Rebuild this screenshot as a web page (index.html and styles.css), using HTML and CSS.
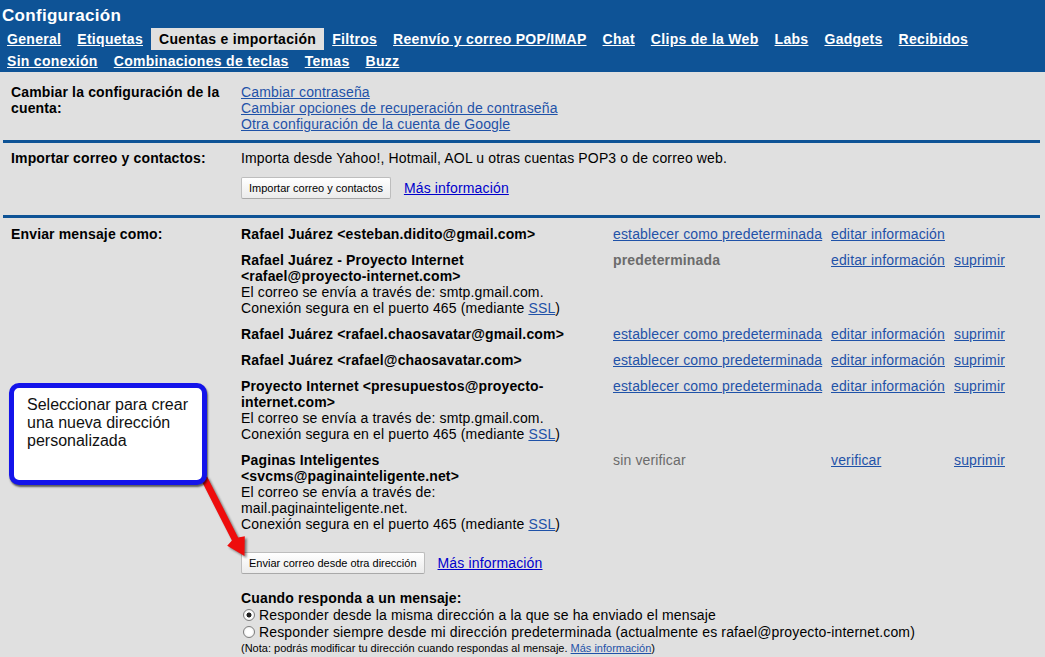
FILE: index.html
```html
<!DOCTYPE html>
<html lang="es">
<head>
<meta charset="utf-8">
<title>Configuración</title>
<link rel="stylesheet" href="styles.css">
</head>
<body>
<div class="page">
  <header class="header">
    <h1 class="title">Configuración</h1>
    <nav class="tabs">
      <a class="tab">General</a>
      <a class="tab">Etiquetas</a>
      <a class="tab active">Cuentas e importación</a>
      <a class="tab">Filtros</a>
      <a class="tab">Reenvío y correo POP/IMAP</a>
      <a class="tab">Chat</a>
      <a class="tab">Clips de la Web</a>
      <a class="tab">Labs</a>
      <a class="tab">Gadgets</a>
      <a class="tab">Recibidos</a>
    </nav>
    <nav class="tabs">
      <a class="tab">Sin conexión</a>
      <a class="tab">Combinaciones de teclas</a>
      <a class="tab">Temas</a>
      <a class="tab">Buzz</a>
    </nav>
  </header>

  <section class="section sec-account">
    <div class="label">Cambiar la configuración de la cuenta:</div>
    <div class="body links-col">
      <a class="link">Cambiar contraseña</a>
      <a class="link">Cambiar opciones de recuperación de contraseña</a>
      <a class="link">Otra configuración de la cuenta de Google</a>
    </div>
  </section>

  <section class="section sec-import">
    <div class="label">Importar correo y contactos:</div>
    <div class="body">
      <div>Importa desde Yahoo!, Hotmail, AOL u otras cuentas POP3 o de correo web.</div>
      <div class="btn-row">
        <button class="btn">Importar correo y contactos</button>
        <a class="link link-strong">Más información</a>
      </div>
    </div>
  </section>

  <section class="section sec-send">
    <div class="label">Enviar mensaje como:</div>
    <div class="body">
      <div class="accounts">
        <div class="acct-name"><b>Rafael Juárez &lt;esteban.didito@gmail.com&gt;</b></div>
        <div><a class="link">establecer como predeterminada</a></div>
        <div><a class="link">editar información</a></div>
        <div></div>

        <div class="acct-name"><b>Rafael Juárez - Proyecto Internet &lt;rafael@proyecto-internet.com&gt;</b><br>El correo se envía a través de: smtp.gmail.com.<br>Conexión segura en el puerto 465 (mediante <a class="link">SSL</a>)</div>
        <div class="muted"><b>predeterminada</b></div>
        <div><a class="link">editar información</a></div>
        <div><a class="link">suprimir</a></div>

        <div class="acct-name"><b>Rafael Juárez &lt;rafael.chaosavatar@gmail.com&gt;</b></div>
        <div><a class="link">establecer como predeterminada</a></div>
        <div><a class="link">editar información</a></div>
        <div><a class="link">suprimir</a></div>

        <div class="acct-name"><b>Rafael Juárez &lt;rafael@chaosavatar.com&gt;</b></div>
        <div><a class="link">establecer como predeterminada</a></div>
        <div><a class="link">editar información</a></div>
        <div><a class="link">suprimir</a></div>

        <div class="acct-name"><b>Proyecto Internet &lt;presupuestos@proyecto-internet.com&gt;</b><br>El correo se envía a través de: smtp.gmail.com.<br>Conexión segura en el puerto 465 (mediante <a class="link">SSL</a>)</div>
        <div><a class="link">establecer como predeterminada</a></div>
        <div><a class="link">editar información</a></div>
        <div><a class="link">suprimir</a></div>

        <div class="acct-name"><b>Paginas Inteligentes &lt;svcms@paginainteligente.net&gt;</b><br>El correo se envía a través de: mail.paginainteligente.net.<br>Conexión segura en el puerto 465 (mediante <a class="link">SSL</a>)</div>
        <div class="muted">sin verificar</div>
        <div><a class="link">verificar</a></div>
        <div><a class="link">suprimir</a></div>
      </div>

      <div class="btn-row send-row">
        <button class="btn">Enviar correo desde otra dirección</button>
        <a class="link link-strong">Más información</a>
      </div>

      <div class="reply">
        <div class="reply-title">Cuando responda a un mensaje:</div>
        <label class="radio-line"><input type="radio" name="reply" checked> Responder desde la misma dirección a la que se ha enviado el mensaje</label>
        <label class="radio-line"><input type="radio" name="reply"> Responder siempre desde mi dirección predeterminada (actualmente es rafael@proyecto-internet.com)</label>
        <div class="note">(Nota: podrás modificar tu dirección cuando respondas al mensaje. <a class="link">Más información</a>)</div>
      </div>
    </div>
  </section>

  <svg class="arrow" width="60" height="95" viewBox="0 0 60 95" aria-hidden="true">
    <polygon points="5.9,9.6 12.1,6.4 43.1,67.4 49.8,66.3 49.5,86 32.2,75.7 36.9,70.6" fill="#ee0d0d"/>
  </svg>
  <div class="callout">Seleccionar para crear una nueva dirección personalizada</div>
</div>
</body>
</html>
```

FILE: styles.css
```css
* { box-sizing: border-box; }

body {
  margin: 0;
  background: #e0e0e0;
  font-family: "Liberation Sans", Arial, sans-serif;
  font-size: 14px;
  line-height: 16px;
  color: #000;
  letter-spacing: 0.15px;
}

.page {
  position: relative;
  width: 1045px;
  height: 657px;
  overflow: hidden;
}

.header {
  background: #0e5396;
  height: 72px;
  color: #fff;
}

.title {
  margin: 0;
  height: 28px;
  padding: 2px 0 0 2px;
  font-size: 17px;
  line-height: 28px;
  font-weight: bold;
  letter-spacing: 0.3px;
}

.tabs {
  display: flex;
  height: 22px;
  margin-left: -1px;
}

.tab {
  padding: 0 8px;
  line-height: 22px;
  font-weight: bold;
  color: #fff;
  text-decoration: underline;
  letter-spacing: 0.3px;
  white-space: nowrap;
}

.tab.active {
  background: #e0e0e0;
  color: #000;
  text-decoration: none;
}

.section {
  display: flex;
  margin: 0 5px 0 3px;
  padding: 8px 0 8px 8px;
  border-bottom: 3px solid #0e5396;
}

.sec-account { padding-top: 12px; padding-bottom: 8px; }
.sec-import { padding-top: 7px; padding-bottom: 16px; }
.sec-send { border-bottom: none; padding-top: 8px; }

.label {
  width: 230px;
  flex: none;
  font-weight: bold;
  padding-right: 8px;
}

.body { flex: 1; }

.links-col { display: flex; flex-direction: column; align-items: flex-start; }

.link {
  color: #1f52a8;
  text-decoration: underline;
  cursor: pointer;
}

.link-strong { color: #0000cc; }

.btn-row {
  display: flex;
  align-items: center;
  gap: 13px;
  margin-top: 11px;
}

.btn {
  font-family: "Liberation Sans", Arial, sans-serif;
  font-size: 11px;
  letter-spacing: 0;
  height: 22px;
  padding: 0 7px;
  border: 1px solid #bdbdbd;
  border-bottom-color: #a9a9a9;
  border-radius: 2px;
  background: linear-gradient(#ffffff, #ebebeb);
  color: #000;
}

.accounts {
  display: grid;
  grid-template-columns: 372px 218px 123px 1fr;
  row-gap: 10px;
}

.acct-name { padding-right: 27px; }

.muted { color: #6b6b6b; }

.send-row { margin-top: 20px; }

.reply { margin-top: 16px; }

.reply-title { font-weight: bold; }

.radio-line {
  display: flex;
  align-items: center;
  height: 17px;
  gap: 4px;
}

.radio-line input {
  appearance: none;
  -webkit-appearance: none;
  width: 12px;
  height: 12px;
  margin: 0 0 0 2px;
  border: 1px solid #7d7d7d;
  border-radius: 50%;
  background: radial-gradient(circle, #fff 40%, #e4e4e4 100%);
}

.radio-line input:checked {
  background: radial-gradient(circle, #222 0 2.2px, #fff 2.8px 45%, #e4e4e4 100%);
}

.note {
  font-size: 11px;
  line-height: 16px;
  letter-spacing: 0;
}

.arrow {
  position: absolute;
  left: 195px;
  top: 470px;
  z-index: 1;
  filter: drop-shadow(2px 2px 1px rgba(0, 0, 0, 0.45));
}

.callout {
  position: absolute;
  left: 9px;
  top: 383px;
  width: 198px;
  height: 102px;
  background: #fff;
  border: 5px solid #1414ea;
  border-radius: 10px;
  box-shadow: 1px 2px 2px rgba(0, 0, 0, 0.6);
  padding: 8px 0 0 13px;
  font-size: 16px;
  line-height: 18px;
  color: #111;
  letter-spacing: 0;
  z-index: 2;
}
```
